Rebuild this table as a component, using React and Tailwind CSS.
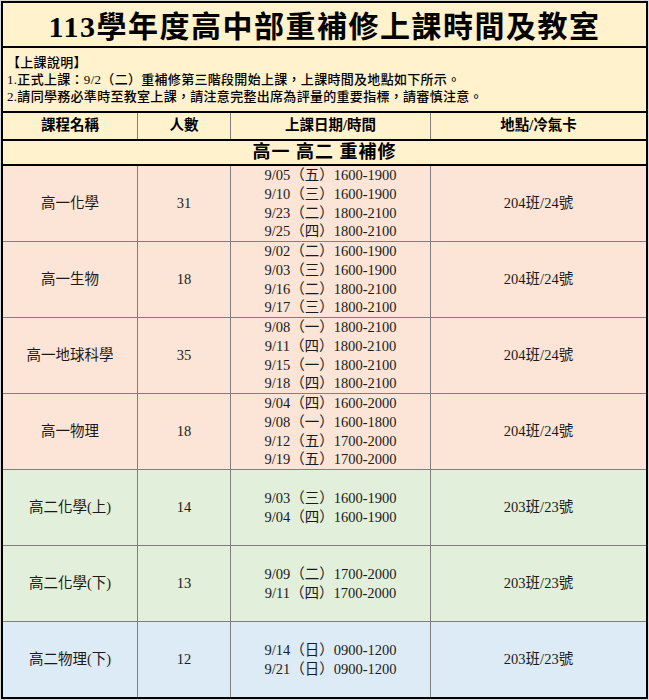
import React from "react";

const PINK = "bg-[#fce4d6]";
const GREEN = "bg-[#e2efda]";
const BLUE = "bg-[#ddebf7]";

const rows = [
  { name: "高一化學", n: "31", dates: ["9/05（五）1600-1900", "9/10（三）1600-1900", "9/23（二）1800-2100", "9/25（四）1800-2100"], room: "204班/24號", bg: PINK },
  { name: "高一生物", n: "18", dates: ["9/02（二）1600-1900", "9/03（三）1600-1900", "9/16（二）1800-2100", "9/17（三）1800-2100"], room: "204班/24號", bg: PINK },
  { name: "高一地球科學", n: "35", dates: ["9/08（一）1800-2100", "9/11（四）1800-2100", "9/15（一）1800-2100", "9/18（四）1800-2100"], room: "204班/24號", bg: PINK },
  { name: "高一物理", n: "18", dates: ["9/04（四）1600-2000", "9/08（一）1600-1800", "9/12（五）1700-2000", "9/19（五）1700-2000"], room: "204班/24號", bg: PINK },
  { name: "高二化學(上)", n: "14", dates: ["9/03（三）1600-1900", "9/04（四）1600-1900"], room: "203班/23號", bg: GREEN },
  { name: "高二化學(下)", n: "13", dates: ["9/09（二）1700-2000", "9/11（四）1700-2000"], room: "203班/23號", bg: GREEN },
  { name: "高二物理(下)", n: "12", dates: ["9/14（日）0900-1200", "9/21（日）0900-1200"], room: "203班/23號", bg: BLUE },
];

const cols = "grid grid-cols-[135px_93px_200px_1fr]";

export default function App() {
  return (
    <div className="w-[649px] h-[700px] bg-[#d9d9d9] pt-px pl-px font-['Liberation_Serif','Noto_Sans_CJK_TC',serif] text-[#1a1a1a]">
      <div className="w-[647px] h-[698px] border-2 border-black flex flex-col bg-[#fff2cc]">
        {/* Title */}
        <div className="h-[45px] flex items-center justify-center pt-[5px] border-b-2 border-black">
          <h1 className="text-[30px] font-bold tracking-[1.5px] leading-none text-black">113學年度高中部重補修上課時間及教室</h1>
        </div>
        {/* Notes */}
        <div className="h-[65px] pt-[6px] pl-[4px] border-b-2 border-black text-[13px] leading-[17px] tracking-[0.3px] font-medium text-black">
          <p>【上課說明】</p>
          <p>1.正式上課：9/2（二）重補修第三階段開始上課，上課時間及地點如下所示。</p>
          <p>2.請同學務必準時至教室上課，請注意完整出席為評量的重要指標，請審慎注意。</p>
        </div>
        {/* Header */}
        <div className={`${cols} h-[28px] border-b-2 border-black text-[14.5px] font-semibold text-black`}>
          <div className="flex items-center justify-center border-r border-[#7f7f7f]">課程名稱</div>
          <div className="flex items-center justify-center border-r border-[#7f7f7f]">人數</div>
          <div className="flex items-center justify-center border-r border-[#7f7f7f]">上課日期/時間</div>
          <div className="flex items-center justify-center">地點/冷氣卡</div>
        </div>
        {/* Section */}
        <div className="h-[25px] flex items-center justify-center border-b-2 border-black text-[18px] font-bold tracking-[1px] text-black">
          高一 高二 重補修
        </div>
        {/* Data */}
        <div className="flex-1 flex flex-col text-[14.5px]">
          {rows.map((r, i) => (
            <div
              key={i}
              className={`${cols} flex-1 ${r.bg} ${i < rows.length - 1 ? "border-b border-[#7f7f7f]" : ""}`}
            >
              <div className="flex items-center justify-center border-r border-[#7f7f7f]">{r.name}</div>
              <div className="flex items-center justify-center border-r border-[#7f7f7f]">{r.n}</div>
              <div className="flex flex-col items-center justify-center border-r border-[#7f7f7f] leading-[18.7px]">
                {r.dates.map((d, j) => (
                  <div key={j}>{d}</div>
                ))}
              </div>
              <div className="flex items-center justify-center">{r.room}</div>
            </div>
          ))}
        </div>
      </div>
    </div>
  );
}
